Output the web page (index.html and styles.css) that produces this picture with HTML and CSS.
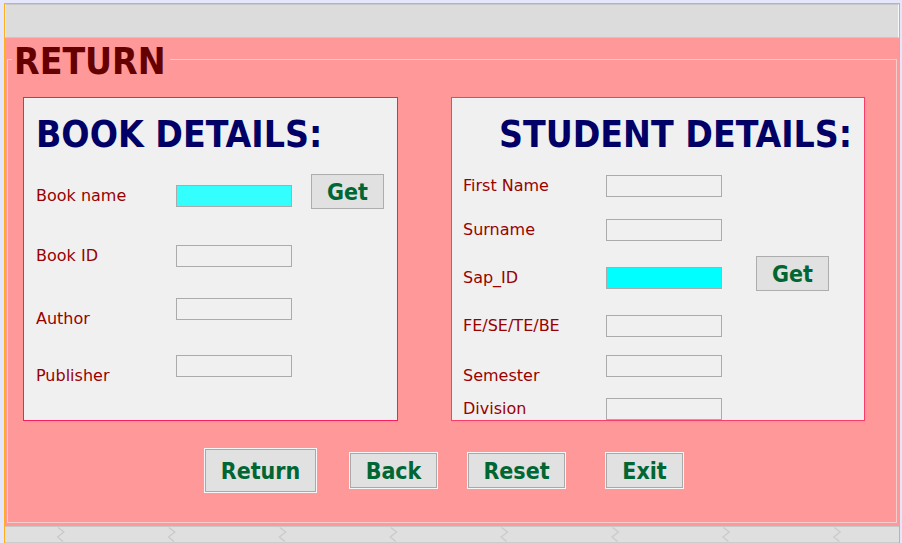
FILE: index.html
```html
<!DOCTYPE html>
<html>
<head>
<meta charset="utf-8">
<link rel="stylesheet" href="styles.css">
</head>
<body>
<div class="frame">
  <div class="topbar"></div>
  <div class="main">
    <div class="group">
      <h1 class="legend">RETURN</h1>
      <div class="panels">
        <section class="panel book">
          <h2 class="ptitle">BOOK DETAILS:</h2>
          <div class="row r1"><span class="lbl">Book name</span><input class="field cyan-a" type="text"><button class="get">Get</button></div>
          <div class="row r2"><span class="lbl">Book ID</span><input class="field" type="text"></div>
          <div class="row r3"><span class="lbl low">Author</span><input class="field" type="text"></div>
          <div class="row r4"><span class="lbl low2">Publisher</span><input class="field" type="text"></div>
        </section>
        <section class="panel student">
          <h2 class="ptitle">STUDENT DETAILS:</h2>
          <div class="row r1"><span class="lbl">First Name</span><input class="field" type="text"></div>
          <div class="row r2"><span class="lbl">Surname</span><input class="field" type="text"></div>
          <div class="row r3"><span class="lbl">Sap_ID</span><input class="field cyan-b" type="text"><button class="get">Get</button></div>
          <div class="row r4"><span class="lbl">FE/SE/TE/BE</span><input class="field" type="text"></div>
          <div class="row r5"><span class="lbl low2">Semester</span><input class="field" type="text"></div>
          <div class="row r6"><span class="lbl">Division</span><input class="field" type="text"></div>
        </section>
      </div>
      <div class="actions">
        <button class="act act-return">Return</button>
        <button class="act act-back">Back</button>
        <button class="act act-reset">Reset</button>
        <button class="act act-exit">Exit</button>
      </div>
    </div>
  </div>
  <div class="status">
    <svg class="zig" width="894" height="15" viewBox="0 0 894 15">
      <defs>
        <pattern id="zz" patternUnits="userSpaceOnUse" x="51" y="0" width="110.9" height="15">
          <polyline points="2,0.5 8,5 1.5,10 7,14.5" fill="none" stroke="#c6c6c6" stroke-width="1"/>
        </pattern>
      </defs>
      <rect x="0" y="0" width="894" height="15" fill="url(#zz)"/>
    </svg>
  </div>
</div>
</body>
</html>
```
FILE: styles.css
```css
* { box-sizing: border-box; }
html, body { margin: 0; padding: 0; }
body {
  background: #e6e6fb;
  width: 902px;
  height: 543px;
  overflow: hidden;
  font-family: "DejaVu Sans", "Liberation Sans", sans-serif;
}
.frame {
  margin: 3px 0 0 4px;
  width: 896px;
  height: 540px;
  border-top: 1px solid #ffad1f;
  border-left: 1px solid #ffad1f;
  border-right: 1px solid #ffad1f;
  display: flex;
  flex-direction: column;
}
.topbar {
  height: 34px;
  background: #dcdcdc;
  border: 1px solid #c8c8c8;
  border-left-color: #ececec;
  border-right-color: #f8f8f8;
}
.main {
  height: 488px;
  background: #ff9999;
  padding: 21px 2px 3px 2px;
}
.group {
  position: relative;
  height: 100%;
  border: 1px solid #f3cdcd;
}
.legend {
  position: absolute;
  left: 4px;
  top: -20px;
  margin: 0;
  padding: 0 4px 0 2px;
  background: #ff9999;
  color: #660000;
  font-family: "DejaVu Sans Condensed", "DejaVu Sans", sans-serif;
  font-stretch: condensed;
  font-weight: bold;
  font-size: 37px;
  line-height: 44px;
}
.panels {
  display: flex;
  margin: 37px 0 0 15px;
}
.panel {
  height: 324px;
  background: #f0f0f0;
  display: flex;
  flex-direction: column;
}
.book {
  width: 375px;
  border: 1px solid #ff1a5e;
  padding-left: 12px;
}
.student {
  width: 414px;
  margin-left: 53px;
  border: 1px solid #ff3a6a;
  padding-left: 11px;
}
.ptitle {
  margin: 15px 0 0 0;
  color: #000066;
  font-family: "DejaVu Sans Condensed", "DejaVu Sans", sans-serif;
  font-stretch: condensed;
  font-weight: bold;
  font-size: 37px;
  line-height: 44px;
  white-space: nowrap;
}
.student .ptitle { margin-left: 36px; }
.row {
  display: flex;
  align-items: center;
  height: 22px;
}
.lbl {
  color: #990000;
  font-size: 16px;
  line-height: 20px;
  white-space: nowrap;
}
.book .lbl { width: 140px; }
.student .lbl { width: 143px; }
.lbl.low { padding-top: 20px; }
.lbl.low2 { padding-top: 19px; }
.field {
  appearance: none;
  margin: 0;
  padding: 0;
  width: 116px;
  height: 22px;
  border: 1px solid #ababab;
  background: #f0f0f0;
  outline: none;
}
.cyan-a { background: #33ffff; }
.cyan-b { background: #00ffff; }
.get {
  margin: 0 0 9px 19px;
  padding: 0;
  width: 73px;
  height: 35px;
  flex: none;
  background: #e1e1e1;
  border: 1px solid #adadad;
  color: #006633;
  font-family: "DejaVu Sans Condensed", "DejaVu Sans", sans-serif;
  font-stretch: condensed;
  font-weight: bold;
  font-size: 23px;
  line-height: 34px;
}
.student .get { margin-left: 34px; }
.book .r1 { margin-top: 28px; }
.book .r2 { margin-top: 38px; }
.book .r3 { margin-top: 31px; }
.book .r4 { margin-top: 35px; }
.student .r1 { margin-top: 18px; }
.student .r2 { margin-top: 22px; }
.student .r3 { margin-top: 26px; }
.student .r4 { margin-top: 26px; }
.student .r5 { margin-top: 18px; }
.student .r6 { margin-top: 21px; }
.actions {
  display: flex;
  align-items: center;
  height: 45px;
  margin: 27px 0 0 196px;
}
.act {
  margin: 0;
  padding: 0;
  height: 37px;
  background: #e1e1e1;
  border: 1px solid #f6f6f6;
  box-shadow: inset 0 0 0 1px #a9a9a9;
  color: #006633;
  font-family: "DejaVu Sans Condensed", "DejaVu Sans", sans-serif;
  font-stretch: condensed;
  font-weight: bold;
  font-size: 23px;
  line-height: 34px;
}
.act-return { width: 113px; height: 45px; }
.act-back { width: 89px; margin-left: 32px; }
.act-reset { width: 99px; margin-left: 29px; }
.act-exit { width: 79px; margin-left: 39px; }
.status {
  height: 17px;
  background: #dfdfdf;
  border-top: 1px solid #c8c8c8;
  border-bottom: 1px solid #cccccc;
}
.zig { display: block; }
```
